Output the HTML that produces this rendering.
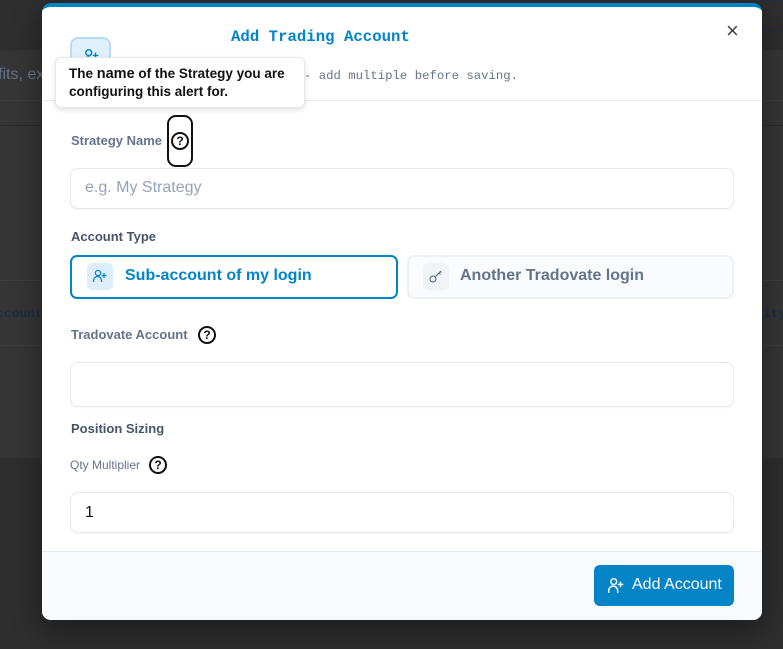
<!DOCTYPE html>
<html><head><style>
*{box-sizing:border-box;margin:0;padding:0}
body{width:783px;height:649px;overflow:hidden;background:#2e2e2e;font-family:"Liberation Sans",sans-serif;position:relative}
.abs{position:absolute}
.mono{font-family:"Liberation Mono",monospace}
.lbl{position:absolute;left:71px;font-size:13px;font-weight:bold;color:#64748b}
.inp{position:absolute;left:70px;width:664px;border:1px solid #e5e7eb;border-radius:8px;background:#fff;box-shadow:0 1px 2px rgba(0,0,0,.04)}
.q{position:absolute;width:18px;height:18px;border:2px solid #111;border-radius:50%;font-size:12px;font-weight:bold;text-align:center;line-height:14px;color:#111}
</style></head><body>
<div class="abs" style="left:0;top:50px;width:783px;height:408px;background:#353535"></div>
<div class="abs" style="left:0;top:100px;width:783px;height:1px;background:#3e3e3e"></div>
<div class="abs" style="left:0;top:125px;width:783px;height:1px;background:#2a2a2a"></div>
<div class="abs" style="left:0;top:280px;width:783px;height:1px;background:#3e3e3e"></div>
<div class="abs" style="left:0;top:345px;width:783px;height:1px;background:#3e3e3e"></div>
<div class="abs" style="left:-2px;top:66px;font-size:16px;color:#64748b">fits, ex</div>
<div class="abs mono" style="left:-4px;top:306px;font-size:13px;font-weight:bold;color:#1e2d45">ccount</div>
<div class="abs mono" style="left:763px;top:306px;font-size:13px;font-weight:bold;color:#1e2d45">ity</div>
<div class="abs" style="left:757px;top:0;width:30px;height:32px;border:1px solid #1e2d45;border-radius:6px"></div>

<div class="abs" style="left:42px;top:3px;width:720px;height:617px;background:#fff;border-radius:9px;overflow:hidden;border-top:4px solid #0284c7;box-shadow:0 10px 30px rgba(0,0,0,.4)">
</div>
<div class="abs" style="left:42px;top:100px;width:720px;height:1px;background:#e5eaf1"></div>
<div class="abs" style="left:70px;top:37px;width:41px;height:41px;background:#e0f0fb;border:2px solid #b5dcf3;border-radius:8px"></div>
<svg class="abs" style="left:82px;top:47px" width="18" height="18" viewBox="0 0 16 16" fill="none" stroke="#0284c7" stroke-width="1.3"><circle cx="6" cy="5" r="2.6"/><path d="M1.5 15v-2a4 4 0 0 1 8 0v2M12 5v5M9.5 7.5h5"/></svg>
<div class="abs mono" style="left:231px;top:28px;font-size:15.7px;font-weight:bold;color:#0284c7">Add Trading Account</div>
<div class="abs mono" style="left:304px;top:69px;font-size:12.3px;color:#64748b">- add multiple before saving.</div>
<div class="abs" style="left:726px;top:18px;font-size:22px;color:#444">×</div>

<div class="abs" style="left:55px;top:57px;width:250px;height:51px;background:#fff;border:1px solid #e5e7eb;border-radius:6px;box-shadow:0 2px 6px rgba(0,0,0,.12);padding:7px 13px;font-size:13.5px;font-weight:bold;color:#111;line-height:17px">The <span style="font-size:14.5px">name</span> of the Strategy you are configuring this alert for.</div>

<div class="lbl" style="top:133px">Strategy Name</div>
<div class="abs" style="left:167px;top:115px;width:26px;height:52px;border:2px solid #111;border-radius:9px"></div>
<div class="q" style="left:171px;top:132px">?</div>
<div class="inp" style="top:168px;height:41px;padding:10px 14px;font-size:16px;color:#94a3b8">e.g. My Strategy</div>

<div class="lbl" style="top:229px;color:#475569">Account Type</div>
<div class="abs" style="left:70px;top:255px;width:328px;height:44px;border:2px solid #0284c7;border-radius:7px"></div>
<div class="abs" style="left:87px;top:263px;width:26px;height:27px;background:#dbeefa;border-radius:5px"></div>
<svg class="abs" style="left:92px;top:268px" width="16" height="16" viewBox="0 0 16 16" fill="none" stroke="#0284c7" stroke-width="1.2"><circle cx="6" cy="5" r="2.6"/><path d="M1.5 14v-1.5a4 4 0 0 1 8 0V14M12 5v5M9.5 7.5h5"/></svg>
<div class="abs" style="left:125px;top:267px;font-size:16px;font-weight:bold;color:#0284c7">Sub-account of my login</div>
<div class="abs" style="left:407px;top:255px;width:327px;height:44px;border:2px solid #eef1f5;background:#fafbfc;border-radius:7px"></div>
<div class="abs" style="left:423px;top:263px;width:26px;height:27px;background:#f1f4f7;border-radius:5px"></div>
<svg class="abs" style="left:428px;top:268px" width="16" height="16" viewBox="0 0 16 16" fill="none" stroke="#64748b" stroke-width="1.2"><circle cx="5" cy="11" r="3"/><path d="M7.2 8.8L13 3M11 5l1.5 1.5M12.5 3.5l1 1"/></svg>
<div class="abs" style="left:460px;top:267px;font-size:16px;font-weight:bold;color:#64748b">Another Tradovate login</div>

<div class="lbl" style="top:327px">Tradovate Account</div>
<div class="q" style="left:198px;top:326px">?</div>
<div class="inp" style="top:362px;height:45px"></div>

<div class="lbl" style="top:421px;color:#475569">Position Sizing</div>
<div class="abs" style="left:70px;top:458px;font-size:12px;color:#64748b">Qty Multiplier</div>
<div class="q" style="left:149px;top:456px">?</div>
<div class="inp" style="top:492px;height:41px;padding:11px 14px;font-size:16px;color:#111">1</div>

<div class="abs" style="left:42px;top:551px;width:720px;height:69px;background:#f8fafc;border-top:1px solid #e2e8f0;border-radius:0 0 9px 9px"></div>
<div class="abs" style="left:594px;top:565px;width:140px;height:41px;background:#0284c7;border-radius:6px;color:#fff;font-size:16px;padding:11px 0 0 38px">Add Account</div>
<svg class="abs" style="left:607px;top:576px" width="18" height="18" viewBox="0 0 16 16" fill="none" stroke="#fff" stroke-width="1.3"><circle cx="6" cy="5" r="2.6"/><path d="M1.5 15v-2a4 4 0 0 1 8 0v2M12 5v5M9.5 7.5h5"/></svg>
</body></html>
